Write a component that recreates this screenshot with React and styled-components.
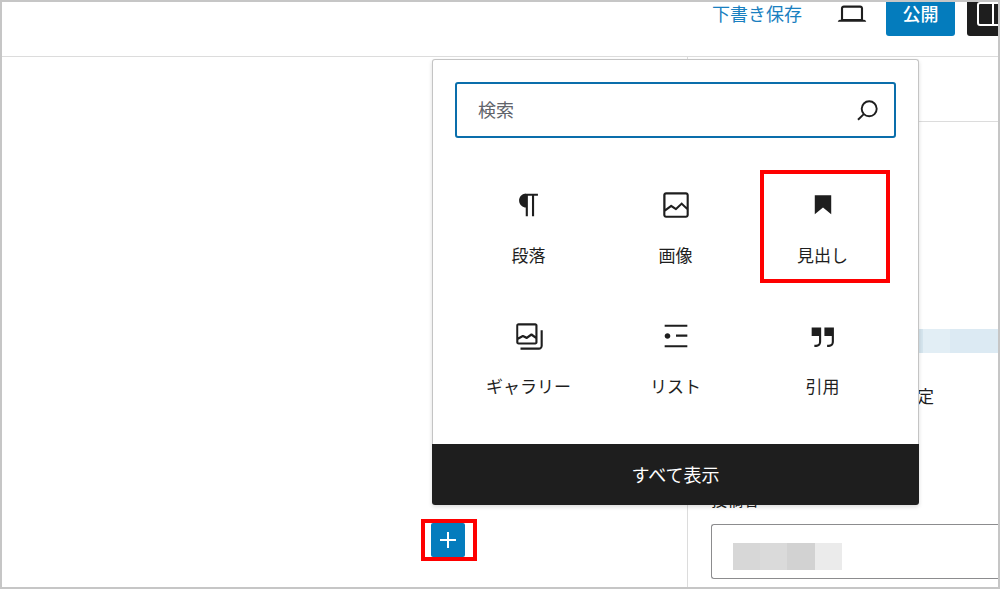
import React from "react";
import styled, { createGlobalStyle } from "styled-components";

const GlobalStyle = createGlobalStyle`
  *, *::before, *::after { box-sizing: border-box; }
  body {
    margin: 0;
    background: #fff;
    color: #1e1e1e;
    font-family: "Noto Sans CJK JP", sans-serif;
  }
  button, input { font: inherit; color: inherit; }
  button { cursor: pointer; }
  svg { display: block; fill: currentColor; flex: none; }
`;

const Frame = styled.div`
  display: flex;
  flex-direction: column;
  min-height: 100vh;
  border: 2px solid #c6c6c6;
`;

const Header = styled.header`
  display: flex;
  align-items: flex-start;
  justify-content: flex-end;
  height: 55px;
  border-bottom: 1px solid #dcdcdc;
`;

const HeaderButton = styled.button`
  display: flex;
  align-items: center;
  justify-content: center;
  height: 34px;
  padding: 0 12px 12px;
  border: 0;
  border-radius: 0 0 3px 3px;
  background: transparent;
  font-size: 18px;
  line-height: 24px;
`;

const SaveDraft = styled(HeaderButton)`
  color: #1a80c0;
  margin-right: 13px;
`;

const Preview = styled(HeaderButton)`
  padding: 0 8px 10px;
  margin-right: 9px;
`;

const Publish = styled(HeaderButton)`
  width: 69px;
  background: #047cbd;
  color: #fff;
  font-weight: 500;
  margin-right: 12px;
`;

const PanelToggle = styled(HeaderButton)`
  justify-content: flex-start;
  width: 31px;
  padding: 0 0 10px 4px;
  border-radius: 0 0 0 3px;
  background: #1e1e1e;
  color: #fff;
  overflow: hidden;
`;

const Workspace = styled.div`
  display: flex;
  flex: 1;
`;

const Canvas = styled.main`
  display: flex;
  flex: 1;
  align-items: flex-end;
  justify-content: flex-end;
  min-height: 530px;
  padding: 0 210px 26px 0;
`;

const InserterAnchor = styled.div`
  position: relative;
`;

const InserterHighlight = styled.div`
  display: flex;
  padding: 0 8px 0 6px;
  border: 4px solid #fe0000;
`;

const InserterButton = styled.button`
  display: flex;
  align-items: center;
  justify-content: center;
  width: 34px;
  height: 34px;
  padding: 0;
  border: 0;
  border-radius: 2px;
  background: #047cbd;
  color: #fff;
`;

const Popover = styled.section`
  position: absolute;
  z-index: 2;
  left: 11px;
  bottom: calc(100% + 14px);
  width: 487px;
  border-radius: 3px;
  background: #fff;
  box-shadow: 0 2px 4px rgba(0, 0, 0, 0.14);
`;

const PopoverBody = styled.div`
  padding: 22px 22px 27px;
  border: 1px solid #c4c4c4;
  border-bottom: 0;
  border-radius: 3px 3px 0 0;
`;

const SearchBox = styled.label`
  display: flex;
  align-items: center;
  height: 56px;
  padding: 0 9px 0 21px;
  border: 2px solid #0a6eab;
  border-radius: 3px;
`;

const SearchInput = styled.input`
  flex: 1;
  min-width: 0;
  padding: 0 0 2px;
  border: 0;
  outline: 0;
  background: transparent;
  font-size: 18px;
  line-height: 24px;
  &::placeholder { color: #61646b; opacity: 1; }
`;

const BlockGrid = styled.div`
  display: grid;
  grid-template-columns: repeat(3, 1fr);
  margin-top: 17px;
`;

const BlockTile = styled.button`
  position: relative;
  display: flex;
  flex-direction: column;
  align-items: center;
  gap: 21px;
  height: 131px;
  padding: 33px 0 0;
  border: 0;
  background: transparent;
  font-size: 17px;
  line-height: 24px;
`;

const TileHighlight = styled.span`
  position: absolute;
  inset: 15px 6px 3px 11px;
  border: 4px solid #fe0000;
`;

const ShowAll = styled.button`
  display: block;
  width: 100%;
  height: 61px;
  padding: 0 0 2px;
  border: 0;
  border-radius: 0 0 3px 3px;
  background: #1e1e1e;
  color: #fff;
  font-size: 18px;
  line-height: 24px;
`;

const Sidebar = styled.aside`
  display: flex;
  flex-direction: column;
  width: 311px;
  border-left: 1px solid #dcdcdc;
`;

const SidebarTabs = styled.div`
  height: 65px;
  border-bottom: 1px solid #dcdcdc;
`;

const Permalink = styled.div`
  display: flex;
  align-items: center;
  justify-content: flex-end;
  height: 24px;
  margin-top: 207px;
`;

const Swatch = styled.span`
  width: ${(p) => p.$width}px;
  height: 100%;
  background: ${(p) => p.$color};
`;

const StickyRow = styled.div`
  display: flex;
  justify-content: flex-end;
  margin-top: 31px;
  padding-right: 64px;
  font-size: 17px;
  line-height: 24px;
`;

const AuthorField = styled.div`
  margin-top: 79px;
  padding-left: 23px;
`;

const AuthorLabel = styled.span`
  display: block;
  margin-bottom: 13px;
  font-size: 16px;
  line-height: 24px;
`;

const AuthorSelect = styled.button`
  display: flex;
  align-items: center;
  width: 100%;
  height: 55px;
  padding: 10px 0 0 21px;
  border: 1px solid #8c8c8e;
  border-right: 0;
  border-radius: 3px 0 0 3px;
  background: #fff;
`;

const Redacted = styled.span`
  display: flex;
  height: 27px;
`;

function WpIcon({ size = 34, d }) {
  return (
    <svg width={size} height={size} viewBox="0 0 24 24" aria-hidden="true">
      <path d={d} />
    </svg>
  );
}

const icons = {
  desktop:
    "M20.5 16h-.7V8c0-1.1-.9-2-2-2H6.2c-1.1 0-2 .9-2 2v8h-.7c-.8 0-1.5.7-1.5 1.5h20c0-.8-.7-1.5-1.5-1.5zM5.7 8c0-.3.2-.5.5-.5h11.6c.3 0 .5.2.5.5v7.6H5.7V8z",
  paragraph:
    "M18.3 4H9.9v-.1l-.9.2c-2.3.4-4 2.4-4 4.8s1.7 4.4 4 4.8l.7.1V20h1.5V5.5h2.9V20h1.5V5.5h2.7V4z",
  image:
    "M19 3H5c-1.1 0-2 .9-2 2v14c0 1.1.9 2 2 2h14c1.1 0 2-.9 2-2V5c0-1.1-.9-2-2-2zM5 4.5h14c.3 0 .5.2.5.5v8.4l-3-2.9c-.3-.3-.8-.3-1 0L11.9 14 9 12c-.3-.2-.6-.2-.8 0l-3.6 2.6V5c-.1-.3.1-.5.4-.5zm14 15H5c-.3 0-.5-.2-.5-.5v-2.4l4.1-3 3 1.9c.3.2.7.2.9-.1L16 12l3.5 3.4V19c0 .3-.2.5-.5.5z",
  heading: "M6.2 5.2v13.4l5.8-4.8 5.8 4.8V5.2z",
  gallery:
    "M20.2 8v11c0 .7-.6 1.2-1.2 1.2H6v1.5h13c1.5 0 2.7-1.2 2.7-2.8V8zM18 16.4V4.6c0-.9-.7-1.6-1.6-1.6H4.6C3.7 3 3 3.7 3 4.6v11.8c0 .9.7 1.6 1.6 1.6h11.8c.9 0 1.6-.7 1.6-1.6zM4.5 4.6c0-.1.1-.1.1-.1h11.8c.1 0 .1.1.1.1V12l-2.3-1.7c-.3-.2-.6-.2-.9 0l-2.9 2.1L8 11.3c-.2-.1-.5-.1-.7 0l-2.9 1.5V4.6zm0 11.8v-1.8l3.2-1.7 2.4 1.2c.2.1.5.1.8-.1l2.8-2 2.8 2v2.4c0 .1-.1.1-.1.1H4.6c0 .1-.1.1-.1-.1z",
  list: "M4 4v1.5h16V4H4zm8 8.5h8V11h-8v1.5zM4 20h16v-1.5H4V20zm4-8c0-1.1-.9-2-2-2s-2 .9-2 2 .9 2 2 2 2-.9 2-2z",
  quote:
    "M13 6v6h5.2v4c0 .8-.2 1.4-.5 1.7-.6.6-1.6.6-2.5.5h-.3v1.5h.5c1 0 2.3-.1 3.3-1 .6-.6 1-1.6 1-2.8V6H13zm-9 6h5.2v4c0 .8-.2 1.4-.5 1.7-.6.6-1.6.6-2.5.5h-.3v1.5h.5c1 0 2.3-.1 3.3-1 .6-.6 1-1.6 1-2.8V6H4v6z",
};

const blocks = [
  { label: "段落", icon: "paragraph" },
  { label: "画像", icon: "image" },
  { label: "見出し", icon: "heading", highlighted: true },
  { label: "ギャラリー", icon: "gallery" },
  { label: "リスト", icon: "list" },
  { label: "引用", icon: "quote" },
];

const permalinkColors = [
  { width: 5, color: "#d5e5ee" },
  { width: 27, color: "#e2eef5" },
  { width: 48, color: "#dceaf3" },
];

const authorColors = [
  { width: 27, color: "#d7d7d7" },
  { width: 27, color: "#dadada" },
  { width: 28, color: "#d2d2d2" },
  { width: 27, color: "#ebebeb" },
];

function BlockPicker() {
  return (
    <Popover>
      <PopoverBody>
        <SearchBox>
          <SearchInput type="search" placeholder="検索" aria-label="検索" />
          <svg width="36" height="36" viewBox="0 0 36 36" aria-hidden="true">
            <g fill="none" stroke="currentColor" strokeWidth="1.9">
              <circle cx="20.2" cy="16.8" r="7.5" />
              <path d="M14.8 22.1L9 27.8" />
            </g>
          </svg>
        </SearchBox>
        <BlockGrid>
          {blocks.map((b) => (
            <BlockTile type="button" key={b.label}>
              <WpIcon d={icons[b.icon]} />
              {b.label}
              {b.highlighted && <TileHighlight />}
            </BlockTile>
          ))}
        </BlockGrid>
      </PopoverBody>
      <ShowAll type="button">すべて表示</ShowAll>
    </Popover>
  );
}

export default function App() {
  return (
    <>
      <GlobalStyle />
      <Frame>
        <Header>
          <SaveDraft type="button">下書き保存</SaveDraft>
          <Preview type="button" aria-label="プレビュー">
            <WpIcon d={icons.desktop} />
          </Preview>
          <Publish type="button">公開</Publish>
          <PanelToggle type="button" aria-label="設定">
            <svg width="36" height="36" viewBox="0 0 36 36" aria-hidden="true">
              <rect x="7" y="7" width="23" height="22" rx="2" fill="none" stroke="currentColor" strokeWidth="2" />
              <path d="M21 7h2v22h-2z" />
            </svg>
          </PanelToggle>
        </Header>
        <Workspace>
          <Canvas>
            <InserterAnchor>
              <InserterHighlight>
                <InserterButton type="button" aria-label="ブロックを追加">
                  <svg width="18" height="18" viewBox="0 0 18 18" aria-hidden="true">
                    <path d="M8 1h2v7h7v2h-7v7H8v-7H1V8h7z" />
                  </svg>
                </InserterButton>
              </InserterHighlight>
              <BlockPicker />
            </InserterAnchor>
          </Canvas>
          <Sidebar>
            <SidebarTabs />
            <Permalink>
              {permalinkColors.map((s) => (
                <Swatch key={s.color} $width={s.width} $color={s.color} />
              ))}
            </Permalink>
            <StickyRow>定</StickyRow>
            <AuthorField>
              <AuthorLabel id="author-label">投稿者</AuthorLabel>
              <AuthorSelect type="button" aria-haspopup="listbox" aria-labelledby="author-label">
                <Redacted>
                  {authorColors.map((s) => (
                    <Swatch key={s.color} $width={s.width} $color={s.color} />
                  ))}
                </Redacted>
              </AuthorSelect>
            </AuthorField>
          </Sidebar>
        </Workspace>
      </Frame>
    </>
  );
}
